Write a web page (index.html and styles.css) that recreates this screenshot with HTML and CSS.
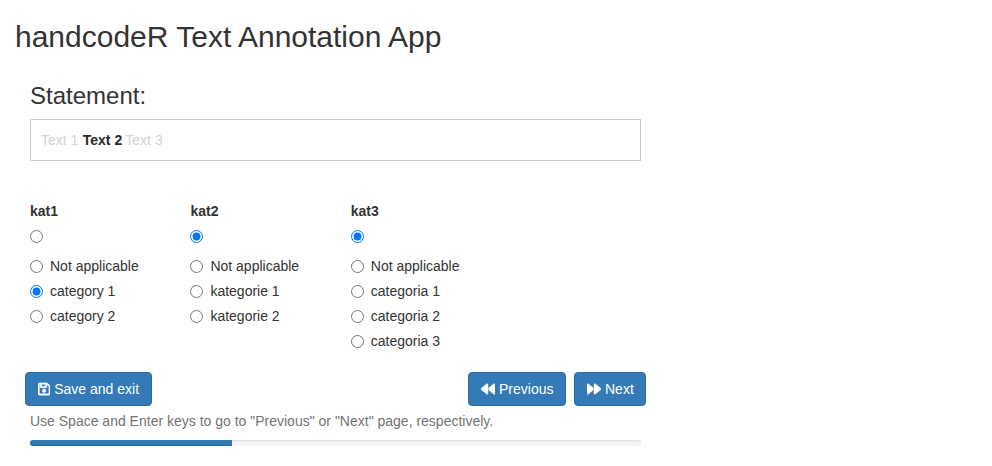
FILE: index.html
```html
<!DOCTYPE html>
<html lang="en">
<head>
<meta charset="utf-8">
<title>handcodeR Text Annotation App</title>
<link rel="stylesheet" href="styles.css">
</head>
<body>
<h2>handcodeR Text Annotation App</h2>
<main>
  <h3>Statement:</h3>
  <div class="statement"><span class="context">Text 1</span> <b>Text 2</b> <span class="context">Text 3</span></div>
  <form class="categories">
    <fieldset>
      <legend>kat1</legend>
      <label class="empty"><input type="radio" name="kat1" aria-label="none"></label>
      <label><input type="radio" name="kat1">Not applicable</label>
      <label><input type="radio" name="kat1" checked>category 1</label>
      <label><input type="radio" name="kat1">category 2</label>
    </fieldset>
    <fieldset>
      <legend>kat2</legend>
      <label class="empty"><input type="radio" name="kat2" aria-label="none" checked></label>
      <label><input type="radio" name="kat2">Not applicable</label>
      <label><input type="radio" name="kat2">kategorie 1</label>
      <label><input type="radio" name="kat2">kategorie 2</label>
    </fieldset>
    <fieldset>
      <legend>kat3</legend>
      <label class="empty"><input type="radio" name="kat3" aria-label="none" checked></label>
      <label><input type="radio" name="kat3">Not applicable</label>
      <label><input type="radio" name="kat3">categoria 1</label>
      <label><input type="radio" name="kat3">categoria 2</label>
      <label><input type="radio" name="kat3">categoria 3</label>
    </fieldset>
  </form>
  <div class="actions">
    <button class="btn save"><svg class="disk" viewBox="0 0 448 512"><path d="M48 96V416c0 8.800 7.200 16 16 16H384c8.800 0 16-7.200 16-16V170.500c0-4.200-1.700-8.300-4.700-11.300l33.900-33.900c12 12 18.700 28.300 18.700 45.300V416c0 35.300-28.700 64-64 64H64c-35.300 0-64-28.700-64-64V96C0 60.700 28.700 32 64 32H309.500c17 0 33.300 6.700 45.300 18.700l74.500 74.500-33.900 33.900L320.800 84.700c-.3-.3-.5-.5-.8-.8V184c0 13.300-10.700 24-24 24H104c-13.300 0-24-10.700-24-24V80H64c-8.800 0-16 7.200-16 16zm80-16v80H272V80H128zm32 240a64 64 0 1 1 128 0 64 64 0 1 1-128 0z"/></svg>Save and exit</button>
    <button class="btn previous"><svg class="arrows" viewBox="0 0 512 512"><path d="M459.500 440.600c9.500 7.900 22.800 9.700 34.100 4.400S512 428.400 512 416V96c0-12.400-7.200-23.700-18.400-29s-24.500-3.600-34.100 4.400L288 214.300V297.700L459.500 440.600zM256 352V96c0-12.400-7.200-23.700-18.400-29s-24.500-3.600-34.100 4.400l-192 160C4.200 237.500 0 246.500 0 256s4.200 18.500 11.500 24.600l192 160c9.500 7.900 22.800 9.700 34.100 4.400S256 428.400 256 416V352z"/></svg>Previous</button>
    <button class="btn next"><svg class="arrows flip" viewBox="0 0 512 512"><path d="M459.500 440.600c9.500 7.900 22.800 9.700 34.100 4.400S512 428.400 512 416V96c0-12.400-7.200-23.700-18.400-29s-24.500-3.600-34.100 4.400L288 214.300V297.700L459.500 440.600zM256 352V96c0-12.400-7.200-23.700-18.400-29s-24.500-3.600-34.100 4.400l-192 160C4.200 237.500 0 246.500 0 256s4.200 18.500 11.500 24.600l192 160c9.500 7.900 22.800 9.700 34.100 4.400S256 428.400 256 416V352z"/></svg>Next</button>
  </div>
  <p class="help">Use Space and Enter keys to go to "Previous" or "Next" page, respectively.</p>
  <div class="progress"><div class="bar"></div></div>
</main>
</body>
</html>
```
FILE: styles.css
```css
* { box-sizing: border-box; }
body {
  margin: 0;
  padding: 20px 15px 0;
  background: #fff;
  color: #333;
  font: 14px/20px "Liberation Sans", Arial, sans-serif;
}
h2, h3 { margin: 0; font-weight: 400; line-height: 1.1; }
h2 { font-size: 30px; height: 33px; }
h3 { font-size: 24px; height: 26px; }
main { width: 641px; padding: 30px 15px 0; }
.statement {
  width: 611px;
  height: 42px;
  margin-top: 10px;
  padding: 10px;
  border: 1px solid #ccc;
}
.statement b { margin: 0 -.5px 0 .5px; color: #292929; }
.context { color: #d3d3d3; }
.categories { display: flex; height: 171px; margin-top: 40px; }
fieldset { width: 160.400px; min-width: 0; margin: 0; padding: 0; border: 0; }
legend { margin: 0 0 5px; padding: 0; font-weight: 700; }
label { display: flex; height: 20px; margin-bottom: 5px; }
.empty { margin-bottom: 10px; }
input { width: 13px; height: 13px; margin: 4px 7px 0 0; }
.actions { display: flex; gap: 8px; margin: 0 -5px; }
.btn {
  height: 34px;
  padding: 6px 0 6px 12px;
  border: 1px solid #2e6da4;
  border-radius: 4px;
  background: #337ab7;
  color: #fff;
  font: inherit;
  text-align: left;
  white-space: nowrap;
}
.save { width: 127px; margin-right: auto; }
.previous { width: 98px; }
.next { width: 72px; }
.btn svg { height: 14px; fill: #fff; vertical-align: -2px; margin-right: 4px; }
.btn .disk { width: 12.250px; stroke: #fff; stroke-width: 20px; }
.btn .arrows { width: 14px; stroke: #fff; stroke-width: 16px; }
.flip { transform: scaleX(-1); }
.help { margin: 5px 0 9px; color: #737373; }
.progress {
  height: 6px;
  overflow: hidden;
  border-radius: 4px;
  background: #f5f5f5;
  box-shadow: inset 0 1px 2px rgba(0, 0, 0, .1);
}
.bar { width: 33.100%; height: 100%; background: #337ab7; box-shadow: inset 0 -1px 0 rgba(0, 0, 0, .15); }
```
